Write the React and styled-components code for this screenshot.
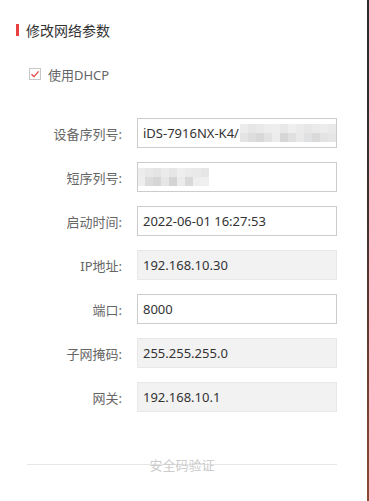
import React from 'react'
import styled, { createGlobalStyle } from 'styled-components'

const Global = createGlobalStyle`
  html, body {
    margin: 0;
    padding: 0;
    background: #ffffff;
  }
  body {
    font-family: "Noto Sans", "Noto Sans CJK SC", sans-serif;
  }
`

const Panel = styled.div`
  box-sizing: border-box;
  width: 369px;
  height: 501px;
  background: #ffffff;
  display: flex;
  flex-direction: column;
  padding-top: 20px;
  overflow: hidden;
  border-right: 2px solid transparent;
  border-image: linear-gradient(to bottom, #2b2b2b, #3a302c 40%, #6b4030 75%, #8a4a30) 1;
`

const Header = styled.div`
  display: flex;
  align-items: center;
  gap: 7px;
  padding-left: 16px;
  height: 20px;
  font-size: 14px;
  color: #333333;
`

const RedBar = styled.span`
  display: block;
  width: 3px;
  height: 12px;
  background: #e8413f;
`

const DhcpRow = styled.label`
  display: flex;
  align-items: center;
  gap: 7px;
  margin: 26px 0 0 29px;
  height: 16px;
  font-size: 13px;
  color: #666666;
`

const CheckBox = styled.span`
  box-sizing: border-box;
  width: 12px;
  height: 12px;
  border: 1px solid #c8c8c8;
  background: #ffffff;
  display: flex;
  align-items: center;
  justify-content: center;
`

const Form = styled.div`
  display: flex;
  flex-direction: column;
  gap: 14px;
  margin-top: 36px;
`

const Row = styled.div`
  display: grid;
  grid-template-columns: 122px 200px;
  column-gap: 15px;
  align-items: center;
`

const Label = styled.span`
  text-align: right;
  font-size: 13px;
  color: #666666;
`

const Field = styled.div`
  box-sizing: border-box;
  height: 30px;
  display: flex;
  align-items: center;
  padding-left: ${p => (p.flush ? 0 : 5)}px;
  font-size: 13px;
  color: #333333;
  border: 1px solid ${p => (p.disabled ? '#e8e8e8' : '#cccccc')};
  background: ${p => (p.disabled ? '#f2f2f2' : '#ffffff')};
  white-space: nowrap;
  overflow: hidden;
`

const Mosaic = styled.span`
  display: grid;
  grid-template-columns: repeat(${p => p.cols}, 8px);
  grid-auto-rows: 9px;
  margin-left: ${p => p.offset || 0}px;
`

const Cell = styled.span`
  display: block;
  background: ${p => p.shade};
`

const Footer = styled.div`
  margin: 43px 0 0 27px;
  width: 310px;
  height: 18px;
  display: flex;
  align-items: center;
  justify-content: center;
  position: relative;
`

const Line = styled.div`
  position: absolute;
  left: 0;
  right: 0;
  top: 9px;
  height: 1px;
  background: #e6e6e6;
`

const FooterText = styled.span`
  position: relative;
  font-size: 13px;
  color: #cccccc;
`

const shadesA = [
  '#ececec', '#e6e6e6', '#e9e9e9', '#ededed', '#eeeeee', '#e8e8e8', '#efefef', '#ebebeb', '#e7e7e7', '#eaeaea', '#ececec', '#e9e9e9',
  '#e4e4e4', '#dddddd', '#d8d8d8', '#e2e2e2', '#ececec', '#d6d6d6', '#e0e0e0', '#e9e9e9', '#dfe1e3', '#dadada', '#e3e3e3', '#e6e6e6'
]

const shadesB = [
  '#ececec', '#e8e8e8', '#e4e4e4', '#ebebeb', '#e6e6e6', '#eeeeee', '#eaeaea', '#e9e9e9', '#e6e6e6',
  '#eeeeee', '#dcdcdc', '#d6d6d6', '#e6e6e6', '#d4d4d4', '#ebebeb', '#d9d9d9', '#eeeeee', '#f0f0f0'
]

function Blur({ shades, cols, offset }) {
  return (
    <Mosaic cols={cols} offset={offset}>
      {shades.map((s, i) => (
        <Cell key={i} shade={s} />
      ))}
    </Mosaic>
  )
}

const rows = [
  { label: '启动时间:', value: '2022-06-01 16:27:53' },
  { label: 'IP地址:', value: '192.168.10.30', disabled: true },
  { label: '端口:', value: '8000' },
  { label: '子网掩码:', value: '255.255.255.0', disabled: true },
  { label: '网关:', value: '192.168.10.1', disabled: true }
]

export default function App() {
  return (
    <>
      <Global />
      <Panel>
        <Header>
          <RedBar />
          <span>修改网络参数</span>
        </Header>
        <DhcpRow>
          <CheckBox>
            <svg width="10" height="10" viewBox="0 0 10 10">
              <path d="M1.5 5.2 L4 7.6 L8.6 2.4" fill="none" stroke="#e8413f" strokeWidth="1.3" />
            </svg>
          </CheckBox>
          <span>使用DHCP</span>
        </DhcpRow>
        <Form>
          <Row>
            <Label>设备序列号:</Label>
            <Field>
              <span>iDS-7916NX-K4/</span>
              <Blur shades={shadesA} cols={12} offset={1} />
            </Field>
          </Row>
          <Row>
            <Label>短序列号:</Label>
            <Field flush>
              <Blur shades={shadesB} cols={9} offset={-1} />
            </Field>
          </Row>
          {rows.map(r => (
            <Row key={r.label}>
              <Label>{r.label}</Label>
              <Field disabled={r.disabled}>{r.value}</Field>
            </Row>
          ))}
        </Form>
        <Footer>
          <Line />
          <FooterText>安全码验证</FooterText>
        </Footer>
      </Panel>
    </>
  )
}
